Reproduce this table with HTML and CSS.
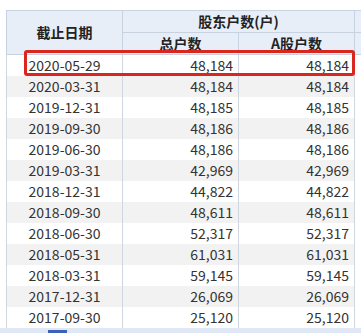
FILE: index.html
```html
<!DOCTYPE html>
<html>
<head>
<meta charset="utf-8">
<link rel="stylesheet" href="styles.css">
</head>
<body>
<div class="wrap">
  <table class="grid">
    <colgroup>
      <col class="c1"><col class="c2"><col class="c3"><col class="c4">
    </colgroup>
    <thead>
      <tr class="h1">
        <th rowspan="2">截止日期</th>
        <th colspan="2">股东户数(户)</th>
        <th class="extra"></th>
      </tr>
      <tr class="h2">
        <th>总户数</th>
        <th>A股户数</th>
        <th class="extra"></th>
      </tr>
    </thead>
    <tbody>
      <tr><td class="d">2020-05-29</td><td class="n">48,184</td><td class="n">48,184</td><td class="x"></td></tr>
      <tr><td class="d">2020-03-31</td><td class="n">48,184</td><td class="n">48,184</td><td class="x"></td></tr>
      <tr><td class="d">2019-12-31</td><td class="n">48,185</td><td class="n">48,185</td><td class="x"></td></tr>
      <tr><td class="d">2019-09-30</td><td class="n">48,186</td><td class="n">48,186</td><td class="x"></td></tr>
      <tr><td class="d">2019-06-30</td><td class="n">48,186</td><td class="n">48,186</td><td class="x"></td></tr>
      <tr><td class="d">2019-03-31</td><td class="n">42,969</td><td class="n">42,969</td><td class="x"></td></tr>
      <tr><td class="d">2018-12-31</td><td class="n">44,822</td><td class="n">44,822</td><td class="x"></td></tr>
      <tr><td class="d">2018-09-30</td><td class="n">48,611</td><td class="n">48,611</td><td class="x"></td></tr>
      <tr><td class="d">2018-06-30</td><td class="n">52,317</td><td class="n">52,317</td><td class="x"></td></tr>
      <tr><td class="d">2018-05-31</td><td class="n">61,031</td><td class="n">61,031</td><td class="x"></td></tr>
      <tr><td class="d">2018-03-31</td><td class="n">59,145</td><td class="n">59,145</td><td class="x"></td></tr>
      <tr><td class="d">2017-12-31</td><td class="n">26,069</td><td class="n">26,069</td><td class="x"></td></tr>
      <tr><td class="d">2017-09-30</td><td class="n">25,120</td><td class="n">25,120</td><td class="x"></td></tr>
    </tbody>
  </table>
  <div class="band"><span class="knob"></span></div>
  <div class="highlight"></div>
</div>
</body>
</html>
```
FILE: styles.css
```css
html, body {
  margin: 0;
  padding: 0;
  background: #ffffff;
  overflow: hidden;
}
body {
  width: 361px;
  height: 333px;
  font-family: "Microsoft YaHei", "Noto Sans CJK SC", sans-serif;
  font-size: 14px;
  color: #333333;
}
.wrap {
  position: relative;
  padding: 10px 0 0 6px;
}
.grid {
  border-collapse: collapse;
  table-layout: fixed;
  width: 372px;
}
.c1, .c2, .c3 { width: 116px; }
.c4 { width: 24px; }
.grid th {
  background: #e8eef7;
  border: 1px solid #c8d3e2;
  font-weight: bold;
  color: #222222;
  padding: 0;
  height: 21px;
  line-height: 21px;
  text-align: center;
}
.grid td {
  padding: 0;
  height: 21px;
  line-height: 21px;
  border-left: 1px solid #cfd6df;
  border-right: 1px solid #cfd6df;
  white-space: nowrap;
}
.grid tbody tr:nth-child(even) td { background: #f2f2f2; }
.grid tbody tr:nth-child(even) td.x { background: #ffffff; }
.d { text-align: center; }
.n { text-align: right; padding-right: 5px !important; }
.band {
  height: 8px;
  margin-left: -6px;
  background: #dfe8f4;
  display: flex;
  align-items: flex-start;
}
.knob {
  display: block;
  width: 19px;
  height: 8px;
  margin-left: 48px;
  margin-top: 2px;
  background: #3c62b8;
}
.highlight {
  position: absolute;
  left: 24px;
  top: 50px;
  width: 325px;
  height: 20px;
  border: 3px solid #d9261f;
  border-radius: 3px;
}
```
